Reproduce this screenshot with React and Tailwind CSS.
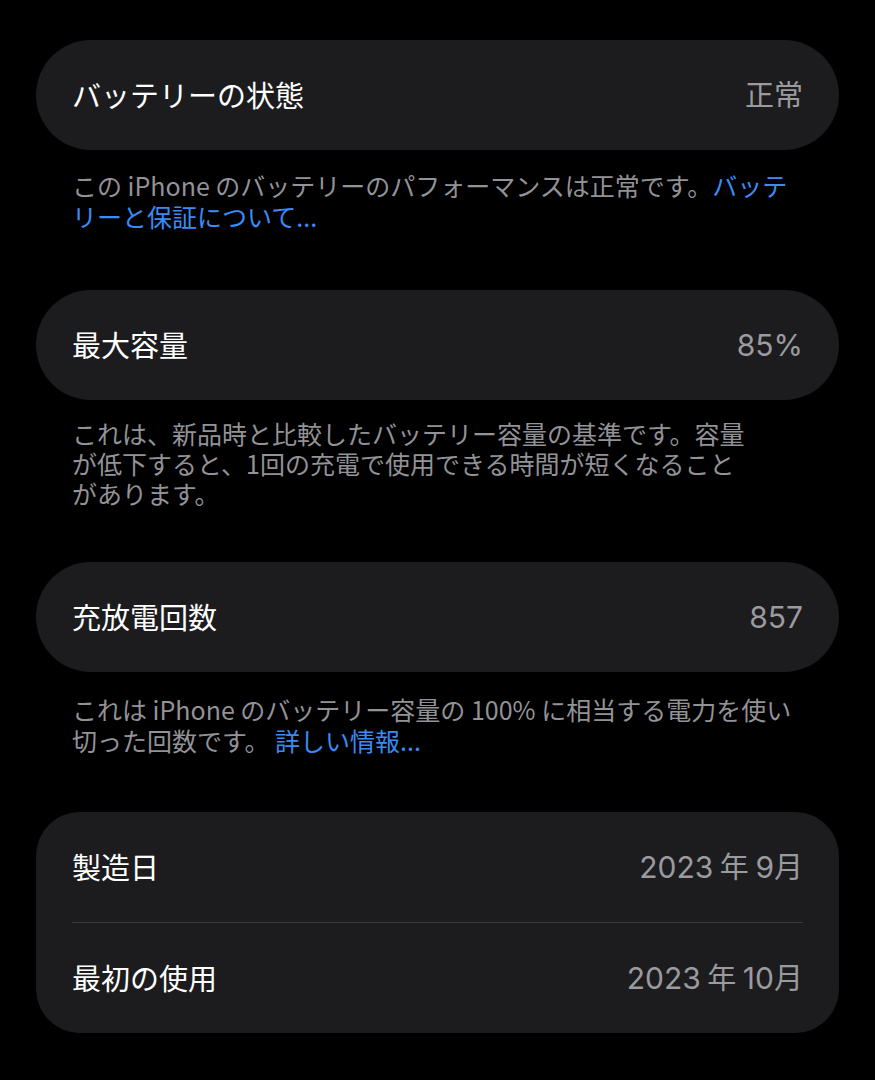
import React from 'react';

const jp = { fontFamily: '"Noto Sans CJK JP", "Noto Sans", sans-serif' };
const num = { fontFamily: 'Inter, "Noto Sans CJK JP", sans-serif' };

function Row({ label, value }) {
  return (
    <div className="flex h-[110px] items-center justify-between px-9">
      <span className="text-[29px] text-white" style={jp}>{label}</span>
      <span className="text-[30px] text-[#9a9a9f]" style={num}>{value}</span>
    </div>
  );
}

function Note({ children, className }) {
  return (
    <p className={'px-9 text-[25px] whitespace-nowrap text-[#929297] ' + className} style={jp}>
      {children}
    </p>
  );
}

function Link({ children }) {
  return <span className="text-[#3a8bf5]">{children}</span>;
}

export default function App() {
  return (
    <div className="min-h-[1080px] w-full bg-black px-9 pt-10">
      <div className="rounded-full bg-[#1c1c1e]">
        <Row label="バッテリーの状態" value={<span className="text-[29px]" style={jp}>正常</span>} />
      </div>
      <Note className="pt-5 pb-[58px] leading-[31px]">
        この iPhone のバッテリーのパフォーマンスは正常です。<Link>バッテ</Link>
        <br />
        <Link>リーと保証について...</Link>
      </Note>

      <div className="rounded-full bg-[#1c1c1e]">
        <Row label="最大容量" value="85%" />
      </div>
      <Note className="pt-[18px] pb-[54px] leading-[30px]">
        これは、新品時と比較したバッテリー容量の基準です。容量
        <br />
        が低下すると、1回の充電で使用できる時間が短くなること
        <br />
        があります。
      </Note>

      <div className="rounded-full bg-[#1c1c1e]">
        <Row label="充放電回数" value="857" />
      </div>
      <Note className="pt-[22px] pb-14 leading-[31px]">
        これは iPhone のバッテリー容量の 100% に相当する電力を使い
        <br />
        切った回数です。 <Link>詳しい情報...</Link>
      </Note>

      <div className="rounded-[44px] bg-[#1c1c1e]">
        <Row label="製造日" value={<>2023<span className="text-[29px]" style={jp}> 年 </span>9<span className="text-[29px]" style={jp}>月</span></>} />
        <div className="mx-9 h-px bg-[#3a3a3c]" />
        <Row label="最初の使用" value={<>2023<span className="text-[29px]" style={jp}> 年 </span>10<span className="text-[29px]" style={jp}>月</span></>} />
      </div>
    </div>
  );
}
